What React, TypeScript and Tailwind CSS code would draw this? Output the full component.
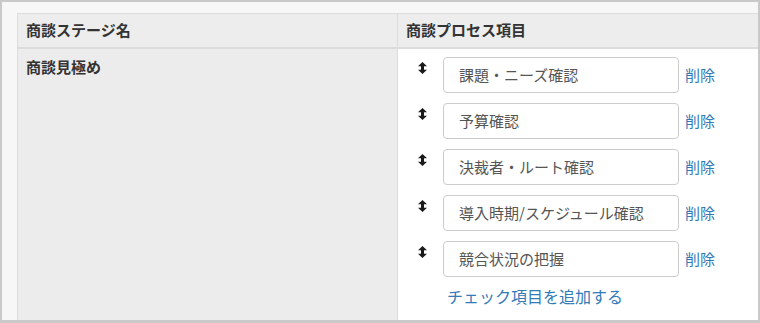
const items = [
  "課題・ニーズ確認",
  "予算確認",
  "決裁者・ルート確認",
  "導入時期/スケジュール確認",
  "競合状況の把握",
];

const DragIcon = () => (
  <svg width="9" height="12" viewBox="0 0 9 12" className="shrink-0">
    <path d="M4.5 0 L9 4.2 L6 4.2 L6 7.8 L9 7.8 L4.5 12 L0 7.8 L3 7.8 L3 4.2 L0 4.2 Z" fill="#1a1a1a" />
  </svg>
);

const App = () => {
  return (
    <div
      className="w-[760px] h-[323px] overflow-hidden bg-[#f7f7f7] border-2 border-[#c9c9c9] border-b-[3px] pl-[15px] pt-[11px] text-[#333]"
      style={{ fontFamily: '"Noto Sans CJK JP", "Noto Sans", sans-serif' }}
    >
      <div className="h-full flex flex-col border-l border-t border-[#dcdcdc]">
        <div className="flex h-[35px] bg-[#ededed] border-b-2 border-[#dcdcdc] text-[15px] font-bold">
          <div className="w-[380px] shrink-0 flex items-center px-[8px] border-r border-[#dcdcdc]">
            商談ステージ名
          </div>
          <div className="flex-1 flex items-center px-[8px]">商談プロセス項目</div>
        </div>
        <div className="flex flex-1">
          <div className="w-[380px] shrink-0 bg-[#ececec] border-r border-[#dcdcdc] px-[8px] pt-[7px] text-[15px] font-bold">
            商談見極め
          </div>
          <div className="flex-1 bg-white pl-[20px] pt-[8px]">
            <div className="flex flex-col gap-[10px]">
              {items.map((item) => (
                <div key={item} className="flex items-start">
                  <div className="w-[25px] pt-[5px]">
                    <DragIcon />
                  </div>
                  <div className="w-[236px] h-[36px] border border-[#cccccc] rounded-[4px] flex items-center pl-[15px] text-[15px] text-[#555]">
                    {item}
                  </div>
                  <a href="#" className="ml-[6px] h-[36px] flex items-center text-[15px] text-[#337ab7]">
                    削除
                  </a>
                </div>
              ))}
            </div>
            <a href="#" className="block ml-[29px] mt-[7px] text-[16px] text-[#337ab7]">
              チェック項目を追加する
            </a>
          </div>
        </div>
      </div>
    </div>
  );
};

export default App;
